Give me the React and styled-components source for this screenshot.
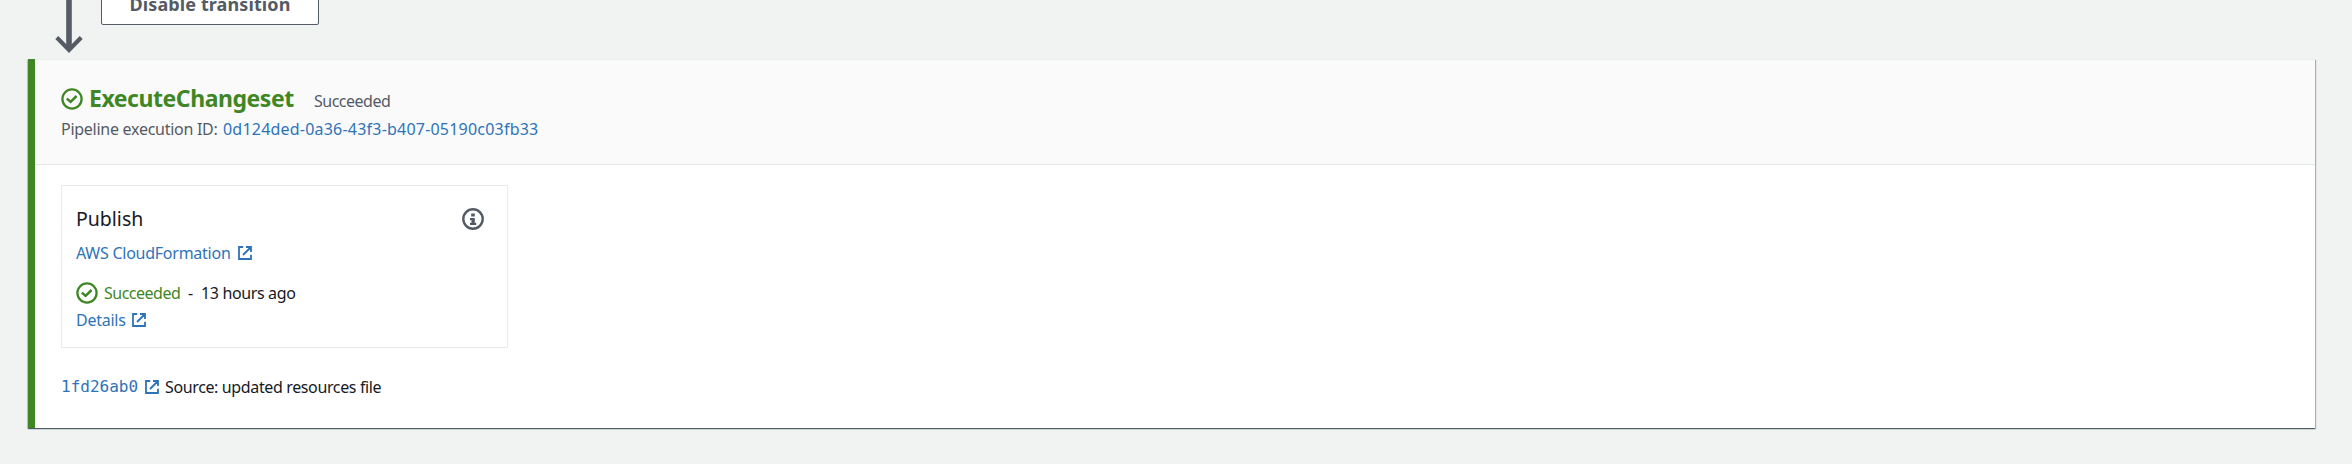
import React from "react";
import styled, { createGlobalStyle } from "styled-components";

const GlobalStyle = createGlobalStyle`
  * { box-sizing: border-box; }
  html, body { margin: 0; background: #f1f3f3; }
  body {
    height: 464px;
    overflow: hidden;
    font-family: "Noto Sans", sans-serif;
    font-size: 16px;
    color: #16191f;
  }
`;

const Page = styled.main`
  width: 2352px;
  height: 464px;
  overflow: hidden;
  background: #f1f3f3;
`;

const Transition = styled.div`
  display: flex;
  align-items: flex-start;
  height: 59px;
  padding-left: 55px;
`;

const Arrow = styled.svg`
  display: block;
  width: 28px;
  height: 54px;
  margin-right: 18px;
`;

const TransitionButton = styled.button`
  width: 218px;
  height: 37px;
  margin: -12px 0 0;
  padding: 0 0 4px;
  border: 1px solid #545b64;
  border-radius: 2px;
  background: #fff;
  color: #545b64;
  font: 700 18px/31px "Noto Sans", sans-serif;
  letter-spacing: 0.1px;
`;

const Stage = styled.section`
  width: 2287px;
  height: 369px;
  margin-left: 28px;
  border-left: 7px solid #3f8624;
  background: #fff;
  box-shadow: 0 1px 1px 0 rgba(0, 28, 36, 0.5), 1px 1px 1px 0 rgba(0, 28, 36, 0.25), -1px 1px 1px 0 rgba(0, 28, 36, 0.15);
`;

const StageHeader = styled.header`
  height: 106px;
  padding: 25px 26px 0;
  border-top: 1px solid #eaeded;
  border-bottom: 1px solid #e6e8e8;
  background: #fafafa;
`;

const Row = styled.div`
  display: flex;
  align-items: center;
  height: ${(p) => p.$h}px;
  margin-top: ${(p) => p.$top || 0}px;
  white-space: pre;
`;

const Text = styled.span`
  flex: none;
  width: ${(p) => p.$w}px;
  padding-top: ${(p) => p.$drop || 0}px;
  font-size: ${(p) => p.$size || 16}px;
  line-height: 24px;
  letter-spacing: ${(p) => p.$spacing || 0}px;
  color: ${(p) => p.$color || "#16191f"};
  white-space: pre;
`;

const Link = styled(Text).attrs({ as: "a" })`
  color: #2e73b8;
  text-decoration: none;
`;

const CommitLink = styled(Link)`
  font-family: "DejaVu Sans Mono", monospace;
`;

const StageName = styled.h2`
  width: 225px;
  margin: 0 0 0 -1px;
  padding-bottom: 3px;
  font-size: 23px;
  line-height: 30px;
  font-weight: 700;
  letter-spacing: -0.45px;
  color: #3f8624;
`;

const StageBody = styled.div`
  padding: 20px 26px 0;
`;

const ActionCard = styled.article`
  width: 447px;
  height: 163px;
  padding: 20px 23px 0 14px;
  border: 1px solid #eaeaea;
`;

const ActionTitle = styled.div`
  display: flex;
  align-items: center;
  justify-content: space-between;
  height: 26px;
`;

const Glyph = styled.svg`
  display: block;
  flex: none;
  width: ${(p) => p.$size}px;
  height: ${(p) => p.$size}px;
  margin-right: ${(p) => p.$gap || 0}px;
`;

const CheckIcon = ({ gap }) => (
  <Glyph $size={22} $gap={gap} viewBox="0 0 22 22" fill="none" stroke="#3f8624" strokeWidth="2.3">
    <circle cx="11" cy="11" r="9.6" />
    <path d="M5.8 10.6l3.8 3.2 6-5.8" strokeWidth="2.5" />
  </Glyph>
);

const InfoIcon = () => (
  <Glyph $size={22} viewBox="0 0 22 22" fill="none" stroke="#545b64" strokeWidth="2.4">
    <circle cx="11" cy="11" r="9.7" />
    <path d="M9.2 5.6h3.6v3H9.2zM8 10h4.8v4.8h1.4v2.3H8v-2.3h1.5v-2.5H8z" fill="#545b64" stroke="none" />
  </Glyph>
);

const ExternalIcon = ({ gap }) => (
  <Glyph $size={14} $gap={gap} viewBox="0 0 14 14" fill="none" stroke="#2e73b8" strokeWidth="1.8">
    <path d="M5.2 1H1v12h12V8.8M8 1h5v5M13 1L5 9" />
  </Glyph>
);

export default function App() {
  return (
    <>
      <GlobalStyle />
      <Page>
        <Transition>
          <Arrow viewBox="0 0 28 54" fill="none" stroke="#545b64">
            <path d="M14 0v49" strokeWidth="5.6" />
            <path d="M1.8 37.5L14 50l12.2-12.5" strokeWidth="4.2" />
          </Arrow>
          <TransitionButton>Disable transition</TransitionButton>
        </Transition>
        <Stage>
          <StageHeader>
            <Row $h={28}>
              <CheckIcon gap={7} />
              <StageName>ExecuteChangeset</StageName>
              <Text $color="#545b64" $spacing={-0.5} $drop={3}>Succeeded</Text>
            </Row>
            <Row $h={24} $top={4}>
              <Text $w={162} $color="#545b64" $spacing={-0.27}>Pipeline execution ID:</Text>
              <Link $spacing={0.21}>0d124ded-0a36-43f3-b407-05190c03fb33</Link>
            </Row>
          </StageHeader>
          <StageBody>
            <ActionCard>
              <ActionTitle>
                <Text $size={19.5}>Publish</Text>
                <InfoIcon />
              </ActionTitle>
              <Row $h={24} $top={9}>
                <Link $w={162} $spacing={-0.25}>AWS CloudFormation</Link>
                <ExternalIcon />
              </Row>
              <Row $h={24} $top={16}>
                <CheckIcon gap={6} />
                <Text $w={84} $color="#3f8624" $spacing={-0.5}>Succeeded</Text>
                <Text $w={13}>-</Text>
                <Text $spacing={-0.36}>13 hours ago</Text>
              </Row>
              <Row $h={24} $top={3}>
                <Link $w={56} $spacing={-0.25}>Details</Link>
                <ExternalIcon />
              </Row>
            </ActionCard>
            <Row $h={24} $top={27}>
              <CommitLink $w={84}>1fd26ab0</CommitLink>
              <ExternalIcon gap={6} />
              <Text $spacing={-0.37}>Source: updated resources file</Text>
            </Row>
          </StageBody>
        </Stage>
      </Page>
    </>
  );
}
